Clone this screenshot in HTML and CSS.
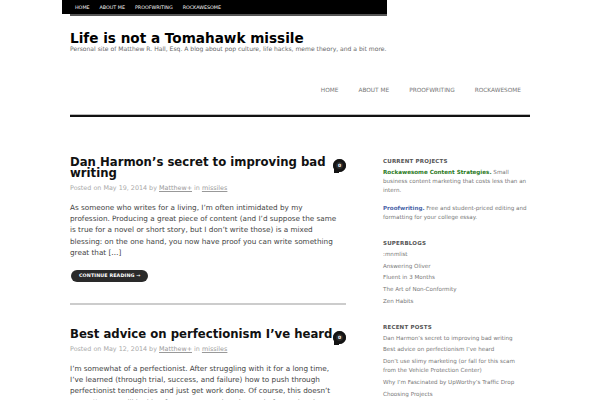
FILE: index.html
```html
<!DOCTYPE html>
<html>
<head>
<meta charset="utf-8">
<link rel="stylesheet" href="styles.css">
</head>
<body>
<div class="topbar">
  <div class="topnav">
    <a>HOME</a><a>ABOUT ME</a><a>PROOFWRITING</a><a>ROCKAWESOME</a>
  </div>
</div>
<div class="page">
  <header class="masthead">
    <h1 class="site-title">Life is not a Tomahawk missile</h1>
    <p class="tagline">Personal site of Matthew R. Hall, Esq. A blog about pop culture, life hacks, meme theory, and a bit more.</p>
  </header>
  <nav class="mainnav">
    <a>HOME</a><a>ABOUT ME</a><a>PROOFWRITING</a><a>ROCKAWESOME</a>
  </nav>
  <div class="rule"></div>
  <div class="content">
    <main class="posts">
      <article class="post">
        <div class="post-head">
          <h2 class="post-title">Dan Harmon’s secret to improving bad writing</h2>
          <span class="bubble">0</span>
        </div>
        <p class="meta">Posted on May 19, 2014 by <u>Matthew+</u> in <u>missiles</u></p>
        <p class="excerpt">As someone who writes for a living, I’m often intimidated by my profession. Producing a great piece of content (and I’d suppose the same is true for a novel or short story, but I don’t write those) is a mixed blessing: on the one hand, you now have proof you can write something great that […]</p>
        <a class="more">CONTINUE READING →</a>
      </article>
      <div class="sep"></div>
      <article class="post second">
        <div class="post-head">
          <h2 class="post-title">Best advice on perfectionism I’ve heard</h2>
          <span class="bubble">0</span>
        </div>
        <p class="meta">Posted on May 12, 2014 by <u>Matthew+</u> in <u>missiles</u></p>
        <p class="excerpt">I’m somewhat of a perfectionist. After struggling with it for a long time, I’ve learned (through trial, success, and failure) how to push through perfectionist tendencies and just get work done. Of course, this doesn’t mean I’m not still looking for ways to produce instead of experiencing</p>
      </article>
    </main>
    <aside class="sidebar">
      <section class="widget">
        <h3>CURRENT PROJECTS</h3>
        <p><b class="green">Rockawesome Content Strategies.</b> Small business content marketing that costs less than an intern.</p>
        <p><b class="blue">Proofwriting.</b> Free and student-priced editing and formatting for your college essay.</p>
      </section>
      <section class="widget">
        <h3>SUPERBLOGS</h3>
        <ul>
          <li>:mnmlist</li>
          <li>Answering Oliver</li>
          <li>Fluent in 3 Months</li>
          <li>The Art of Non-Conformity</li>
          <li>Zen Habits</li>
        </ul>
      </section>
      <section class="widget">
        <h3>RECENT POSTS</h3>
        <ul>
          <li>Dan Harmon’s secret to improving bad writing</li>
          <li>Best advice on perfectionism I’ve heard</li>
          <li>Don’t use slimy marketing (or fall for this scam from the Vehicle Protection Center)</li>
          <li>Why I’m Fascinated by UpWorthy’s Traffic Drop</li>
          <li>Choosing Projects</li>
        </ul>
      </section>
    </aside>
  </div>
</div>
</body>
</html>
```
FILE: styles.css
```css
html, body { margin: 0; padding: 0; background: #fff; }
body { font-family: "DejaVu Sans", sans-serif; color: #333; }
p, h1, h2, h3, ul { margin: 0; padding: 0; }
ul { list-style: none; }

.topbar {
  margin-left: 62px;
  width: 325px;
  height: 14px;
  background: #000;
  position: relative;
}
.topbar::after {
  content: "";
  display: block;
  margin-left: 8px;
  height: 2px;
  background: #555;
  position: relative;
  top: 14px;
}
.topnav {
  position: absolute;
  left: 13px;
  top: 0;
  height: 14px;
  display: flex;
  align-items: center;
  gap: 10px;
  font-size: 4.8px;
  color: #fff;
}

.page { width: 460px; margin: 0 auto; }
.masthead { padding-top: 17px; }
.site-title {
  font-size: 13.6px;
  font-weight: bold;
  color: #000;
  line-height: 14px;
}
.tagline {
  font-size: 6.05px;
  color: #666;
  line-height: 7px;
}
.mainnav {
  display: flex;
  justify-content: flex-end;
  gap: 20px;
  padding-right: 9px;
  margin-top: 35px;
  font-size: 5.8px;
  color: #777;
  line-height: 7px;
}
.rule {
  margin-top: 20px;
  height: 2px;
  background: #111;
  border-top: 1px solid #bbb;
}

.content { display: flex; margin-top: 40px; }
.posts { width: 276px; }
.sidebar { width: 146px; margin-left: 37px; }

.post-head { position: relative; }
.post-title {
  font-size: 11.7px;
  font-weight: bold;
  color: #111;
  line-height: 11px;
  padding-right: 4px;
}
.bubble {
  position: absolute;
  right: 0;
  top: 2px;
  width: 13px;
  height: 13px;
  border-radius: 50%;
  background: #2a2a2a;
  color: #fff;
  font-size: 4.5px;
  font-weight: bold;
  display: flex;
  align-items: center;
  justify-content: center;
  box-shadow: inset 0 0 0 3px #141414;
}
.bubble::after {
  content: "";
  position: absolute;
  left: 1px;
  bottom: -1px;
  width: 5px;
  height: 4px;
  background: #141414;
}
.meta {
  margin-top: 5px;
  font-size: 6.4px;
  color: #aaa;
  line-height: 8px;
}
.meta u { color: #999; }
.excerpt {
  margin-top: 10px;
  max-width: 272px;
  font-size: 7.25px;
  line-height: 11.2px;
  color: #444;
}
.more {
  display: inline-block;
  margin-top: 12px;
  margin-left: 1px;
  height: 12px;
  line-height: 12px;
  padding: 0 8px;
  border-radius: 6px;
  background: #2a2a2a;
  color: #fff;
  font-size: 4.8px;
  font-weight: bold;
  letter-spacing: 0.1px;
}
.sep {
  margin-top: 21px;
  height: 2px;
  background: #ccc;
}
.second { margin-top: 24px; }

.widget { margin-bottom: 17px; font-size: 5.6px; color: #777; }
.widget h3 {
  font-size: 5.5px;
  font-weight: bold;
  color: #555;
  line-height: 8px;
  margin-bottom: 3px;
  letter-spacing: 0.2px;
}
.widget p { line-height: 9px; margin-bottom: 9px; }
.green { color: #2b7a1e; }
.blue { color: #4a64a8; }
.widget li { line-height: 9px; margin-bottom: 2.7px; }
```
